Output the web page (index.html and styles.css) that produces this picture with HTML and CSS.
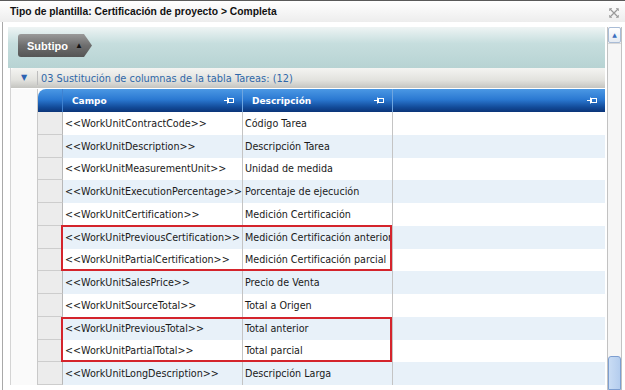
FILE: index.html
```html
<!DOCTYPE html>
<html lang="es">
  <head>
    <meta charset="UTF-8" />
    <title>Tipo de plantilla</title>
    <link rel="stylesheet" href="styles.css">
  </head>
  <body>
    <div class="titlebar">
      <span class="title">Tipo de plantilla: Certificación de proyecto &gt; Completa</span>
      <svg class="close" width="10" height="10" viewBox="0 0 10 10">
        <path d="M1 1 L9 9 M9 1 L1 9" stroke="#9a9a9a" stroke-width="1.2" fill="none" />
        <path d="M0.5 0.5h2.5M0.5 0.5v2.5M9.5 0.5h-2.5M9.5 0.5v2.5M0.5 9.5h2.5M0.5 9.5v-2.5M9.5 9.5h-2.5M9.5 9.5v-2.5" stroke="#b0b0b0" stroke-width="1" fill="none" />
      </svg>
    </div>

    <div class="frame">
      <div class="main">
        <div class="toolbar">
          <div class="subtipo">Subtipo <span class="caret">&#9650;</span></div>
        </div>

        <div class="panel">
          <div class="group">
            <span class="group-toggle">&#9660;</span>
            <span class="group-title">03 Sustitución de columnas de la tabla Tareas: (12)</span>
          </div>

          <div class="grid">
            <div class="gutter"></div>
            <div class="table">
              <div class="head">
                <div class="hcell ind"></div>
                <div class="hcell">Campo <svg class="pin" width="10" height="7" viewBox="0 0 10 7"><path d="M0 3.5h3M3.5 0.5v6" stroke="#fff" fill="none"/><rect x="4.5" y="1.5" width="5" height="4" stroke="#fff" fill="none"/></svg></div>
                <div class="hcell">Descripción <svg class="pin" width="10" height="7" viewBox="0 0 10 7"><path d="M0 3.5h3M3.5 0.5v6" stroke="#fff" fill="none"/><rect x="4.5" y="1.5" width="5" height="4" stroke="#fff" fill="none"/></svg></div>
                <div class="hcell last"><svg class="pin" width="10" height="7" viewBox="0 0 10 7"><path d="M0 3.5h3M3.5 0.5v6" stroke="#fff" fill="none"/><rect x="4.5" y="1.5" width="5" height="4" stroke="#fff" fill="none"/></svg></div>
              </div>
              <div class="rows" id="rows">
                <div class="mark mark-a"></div>
                <div class="mark mark-b"></div>
              </div>
            </div>
          </div>
        </div>
      </div>

      <div class="scroll">
        <div class="up">&#9650;</div>
        <div class="track"></div>
        <div class="thumb"></div>
      </div>
    </div>

    <script>
      const fields = [
        ["<<WorkUnitContractCode>>", "Código Tarea"],
        ["<<WorkUnitDescription>>", "Descripción Tarea"],
        ["<<WorkUnitMeasurementUnit>>", "Unidad de medida"],
        ["<<WorkUnitExecutionPercentage>>", "Porcentaje de ejecución"],
        ["<<WorkUnitCertification>>", "Medición Certificación"],
        ["<<WorkUnitPreviousCertification>>", "Medición Certificación anterior"],
        ["<<WorkUnitPartialCertification>>", "Medición Certificación parcial"],
        ["<<WorkUnitSalesPrice>>", "Precio de Venta"],
        ["<<WorkUnitSourceTotal>>", "Total a Origen"],
        ["<<WorkUnitPreviousTotal>>", "Total anterior"],
        ["<<WorkUnitPartialTotal>>", "Total parcial"],
        ["<<WorkUnitLongDescription>>", "Descripción Larga"]
      ];

      const rows = document.getElementById("rows");

      fields.forEach((f, i) => {
        const row = document.createElement("div");
        row.className = i % 2 ? "row alt" : "row";

        const ind = document.createElement("div");
        ind.className = "cell ind";

        const campo = document.createElement("div");
        campo.className = "cell";
        campo.textContent = f[0];

        const desc = document.createElement("div");
        desc.className = "cell";
        desc.textContent = f[1];

        const rest = document.createElement("div");
        rest.className = "cell last";

        row.appendChild(ind);
        row.appendChild(campo);
        row.appendChild(desc);
        row.appendChild(rest);
        rows.appendChild(row);
      });
    </script>
  </body>
</html>
```

FILE: styles.css
```css
body {
  margin: 0;
  width: 625px;
  height: 390px;
  overflow: hidden;
  background: #fff;
  font-family: "DejaVu Sans", Verdana, sans-serif;
  color: #1a1a1a;
}

.titlebar {
  height: 21px;
  border-top: 1px solid #5a5a5a;
  background: linear-gradient(#ffffff, #ededed);
  display: flex;
  align-items: center;
  justify-content: space-between;
  padding: 0 6px 0 10px;
}

.title {
  font-family: "Liberation Sans", Arial, sans-serif;
  font-weight: bold;
  font-size: 10.3px;
  color: #111;
}

.close {
  margin-top: 2px;
}

.frame {
  display: flex;
  height: 363px;
  margin-left: 2px;
  border-left: 1px solid #a9a9a9;
  padding-top: 5px;
}

.main {
  flex: 1;
  padding-left: 5px;
}

.toolbar {
  height: 34px;
  padding: 7px 0 0 10px;
  background: linear-gradient(#eef4f4, #c6dede 40%, #b7d3d3);
}

.subtipo {
  width: 65px;
  height: 23px;
  padding-left: 9px;
  display: flex;
  align-items: center;
  gap: 7px;
  font-family: "Liberation Sans", Arial, sans-serif;
  font-weight: bold;
  font-size: 11px;
  color: #fff;
  background: linear-gradient(#9a9a9a, #6e6e6e 50%, #555);
  border-radius: 3px 0 0 3px;
  clip-path: polygon(0 0, calc(100% - 8px) 0, 100% 50%, calc(100% - 8px) 100%, 0 100%);
}

.caret {
  font-size: 8px;
  color: #111;
}

.panel {
  margin-left: 2px;
  border-left: 1px solid #d4d4d4;
}

.group {
  height: 20px;
  display: flex;
  align-items: center;
  background: linear-gradient(#f4f4f2, #e2e2de 60%, #c4c4c0);
  border-radius: 3px 0 0 0;
}

.group-toggle {
  width: 26px;
  text-align: center;
  font-size: 8px;
  color: #2d63b2;
  border-right: 1px solid #bdbdbd;
  line-height: 14px;
}

.group-title {
  padding-left: 3px;
  font-size: 9.8px;
  color: #2f67a8;
}

.grid {
  display: flex;
  margin-top: 1px;
}

.gutter {
  width: 26px;
  background: #fafafa;
  border-right: 1px solid #c9c9c9;
}

.table {
  flex: 1;
}

.head,
.row {
  display: grid;
  grid-template-columns: 25px 180px 150px 1fr;
}

.head {
  height: 23px;
  border-radius: 8px 0 0 0;
  overflow: hidden;
  background: linear-gradient(#4b98e4, #2b79d2 45%, #124a98 80%, #0b3578);
}

.hcell {
  display: flex;
  align-items: center;
  justify-content: space-between;
  padding: 0 8px 0 9px;
  border-right: 1px solid #6fa6e0;
  color: #fff;
  font-weight: bold;
  font-size: 9px;
}

.hcell.ind {
  padding: 0;
  border-right-color: #3f82d0;
}

.hcell.last {
  border-right: none;
  justify-content: flex-end;
}

.rows {
  position: relative;
}

.row {
  height: 22.75px;
  background: #fff;
}

.row.alt {
  background: #e8f1f9;
}

.cell {
  display: flex;
  align-items: center;
  padding-left: 2px;
  border-right: 1px solid #c4c4c4;
  font-size: 9.6px;
  white-space: nowrap;
  overflow: hidden;
}

.cell.ind {
  background: #ececec;
  border-bottom: 1px solid #cdcdcd;
  border-right-color: #b8b8b8;
}

.cell.last {
  border-right: none;
}

.mark {
  position: absolute;
  left: 23px;
  width: 327px;
  border: 2px solid #d4242c;
}

.mark-a {
  top: 113px;
  height: 42px;
}

.mark-b {
  top: 205px;
  height: 41px;
}

.scroll {
  width: 13px;
  margin: 0 3px 0 2px;
  border-left: 1px solid #c2c2c2;
  border-right: 1px solid #c2c2c2;
  background: #f6f6f6;
  display: flex;
  flex-direction: column;
}

.up {
  height: 14px;
  border: 1px solid #a9bcd6;
  border-radius: 2px;
  background: linear-gradient(#fff, #e6ebf2);
  font-size: 6px;
  color: #3b6fc0;
  text-align: center;
  line-height: 14px;
}

.track {
  flex: 1;
  border-top: 1px solid #d8d8d8;
}

.thumb {
  height: 32px;
  border: 1px solid #7d9ed0;
  border-radius: 3px 3px 0 0;
  background: linear-gradient(90deg, #c9dcf4, #b4cdee);
}
```
